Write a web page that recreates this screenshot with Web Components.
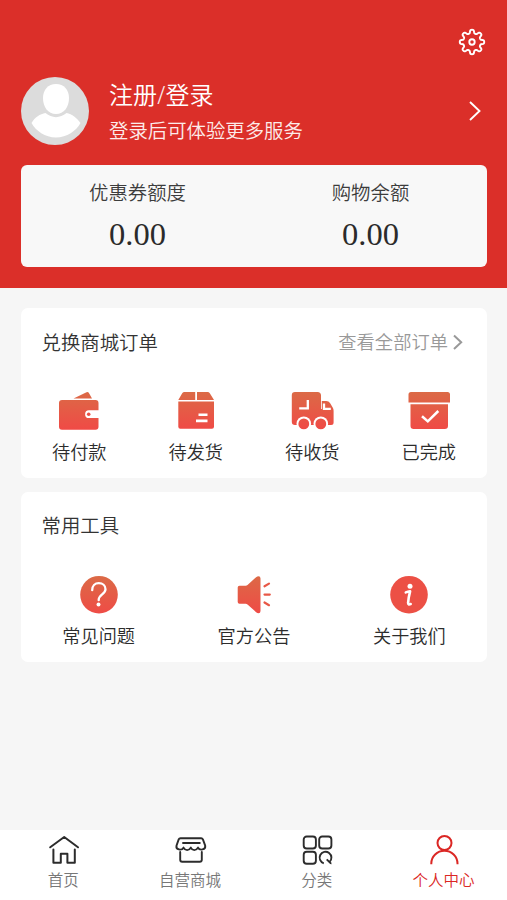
<!DOCTYPE html>
<html lang="zh-CN">
<head>
<meta charset="utf-8">
<title>个人中心</title>
<style>
  html, body { margin: 0; height: 100%; }
  body { background: #f6f6f6; color: #333; font-family: "Noto Sans CJK SC", "Liberation Sans", sans-serif; font-weight: 350; }
</style>
</head>
<body>
<member-page></member-page>
<script>
const grad = (h = 42) => `<defs><linearGradient id="g" gradientUnits="userSpaceOnUse" x1="0" y1="2" x2="0" y2="${h}"><stop offset="0" stop-color="#db6a46"/><stop offset="1" stop-color="#f04a46"/></linearGradient></defs>`;

const ICONS = {
  gear: ['0 0 30 30', `<g fill="none" stroke="#fff" stroke-width="1.9" stroke-linejoin="round"><path id="teeth"/><circle cx="15" cy="15" r="2.7"/></g>`],
  arrow: ['0 0 14 22', `<path d="M2 2l9.500 9L2 20" fill="none" stroke="#fff" stroke-width="1.9"/>`],
  more: ['0 0 12 16', `<path d="M2 1.500l7.200 6.700L2 15" fill="none" stroke="#999" stroke-width="2"/>`],
  avatar: ['0 0 68 68', `<circle cx="34" cy="34" r="34" fill="#dcdcdc"/><path d="M35 7c8 0 13 6 13 14 0 9-5 16-13 16s-13-7-13-16C22 13 27 7 35 7z" fill="#fff"/><path d="M10.500 46C14 40 19 37 24.500 36 31 41.500 39 41.500 45.500 36 51 37 56 41 59.500 46 55 54 46 60.500 35 60.500S15 54 10.500 46z" fill="#fff"/>`],
  wallet: ['0 0 48 44', grad(40) + `<path fill="url(#g)" d="M18.500 8.500L31 2.400q2-1 3.200 1L37 8.500zM7 10h33.500q3 0 3 3v7.300H34a3.900 3.900 0 0 0 0 7.800h9.500v8.600q0 3-3 3H7q-3 0-3-3V13q0-3 3-3z"/><circle cx="33.700" cy="24.200" r="1.800" fill="#ea5045"/>`],
  box: ['0 0 48 44', grad(40) + `<path fill="url(#g)" d="M12.500 2h10.700v8H6.300l3.900-6.700Q11 2 12.500 2zM25 2h10.500q1.500 0 2.300 1.300L42 10H25zM6.300 11.600H42v25.200q0 2-2 2H8.300q-2 0-2-2z"/><path d="M26.500 24.700h9M24 30.900h11.500" stroke="#fff" stroke-width="2.600"/>`],
  truck: ['0 0 48 44', grad(40) + `<path fill="url(#g)" d="M7 2h22.500q3.500 0 3.500 3.500V35H7q-3.200 0-3.200-3.200V5.200Q3.800 2 7 2zM34 11h4.200q2.600 0 3.800 2l2.700 4.500q.9 1.500.9 3.200V32.500q0 2.500-2.500 2.500H32.500V11z"/><path d="M19.800 10v8.300h-8.600M36 13.500v5.300h6.800" fill="none" stroke="#fff" stroke-width="2.300"/><path d="M33.500 10v9" stroke="#fff" stroke-width=".8"/><circle cx="15.800" cy="33.700" r="7.300" fill="#fff"/><circle cx="32.800" cy="33.700" r="7.300" fill="#fff"/><circle cx="15.800" cy="33.900" r="5.400" fill="url(#g)"/><circle cx="32.800" cy="33.900" r="5.400" fill="url(#g)"/>`],
  done: ['0 0 48 44', grad(40) + `<path fill="url(#g)" d="M6 2h36.500Q45 2 45 4.500v8H3.500v-8Q3.500 2 6 2zM5.500 14.300H43v21.500q0 3.200-3.200 3.200H8.700q-3.200 0-3.200-3.200z"/><path d="M17 26.200l5.800 5.200L33.300 21" fill="none" stroke="#fff" stroke-width="2.500"/>`],
  question: ['0 0 48 44', grad() + `<circle cx="24" cy="20.700" r="18.800" fill="url(#g)"/><path d="M17.200 16.200c0-4.400 2.800-7 6.600-7s6.700 2.300 6.700 6c0 4.900-6.800 5.400-6.800 10.500v.5" fill="none" stroke="#fff" stroke-width="2.300" stroke-linecap="round"/><circle cx="23.500" cy="30.500" r="2" fill="#fff"/>`],
  speaker: ['0 0 48 44', grad() + `<g transform="translate(0 -1.300)"><path fill="url(#g)" d="M9.500 13h6.200q1 0 1.800-.8l8.600-7.700q1.200-1 2.400-1 2 0 2 2.200v32.600q0 2.200-2 2.200-1.200 0-2.400-1l-8.600-7.700q-.8-.8-1.800-.8H9.500q-1.800 0-1.800-1.800V14.800Q7.700 13 9.500 13z"/><path d="M34.500 13.600l4.500-2.700M34.500 21.900h5.300M34.500 29.800l4.500 2.700" stroke="#e85847" stroke-width="2.200" stroke-linecap="round"/></g>`],
  info: ['0 0 48 44', `<circle cx="24" cy="20.700" r="18.800" fill="#ec5045"/><circle cx="25" cy="12.200" r="2.500" fill="#fff"/><path d="M20.800 18.400q2-.8 4.300-1-1.800 7-2 11.300-.2 2.500 2.600 1.300" fill="none" stroke="#fff" stroke-width="2.600" stroke-linejoin="round" stroke-linecap="round"/>`],
  home: ['0 0 40 36', `<g fill="none" stroke="currentColor" stroke-width="2" stroke-linejoin="round" stroke-linecap="round"><path d="M7.200 15.300L21.200 5l13.800 10.300M10.400 17.500v13.300h7.400v-9h6.600v9h7.400V17.500"/></g>`],
  shop: ['0 0 40 36', `<g fill="none" stroke="currentColor" stroke-width="1.900" stroke-linejoin="round" stroke-linecap="round"><path d="M10.500 6.200h20.600q1.300 0 1.800 1.200l2.300 6.200c.8 4.200-5.500 5.400-7.200 2-1.800 3.300-5.600 3.300-7.200 0-1.700 3.300-5.600 3.300-7.300 0-1.800 3.400-8 2.200-7-2L8.700 7.400q.5-1.200 1.800-1.200zM13 11h16.800M10.200 20v7.700q0 2 2 2h17.600q2 0 2-2V20"/></g>`],
  grid: ['0 0 40 36', `<g fill="none" stroke="currentColor" stroke-width="1.900"><rect x="6.700" y="4.500" width="12.200" height="12" rx="3"/><rect x="22.200" y="4.500" width="12.200" height="12" rx="3"/><rect x="6.700" y="19.700" width="12.200" height="12" rx="3"/><path d="M26.800 31.300a5.900 5.900 0 1 1 5.700-1.300M29.700 27.300l3.300 3.300q.7.700 1.400.6"/></g>`],
  person: ['0 0 40 36', `<g fill="none" stroke="currentColor" stroke-width="2"><circle cx="20.500" cy="11" r="7"/><path d="M7.300 32.300v-.8a13.100 12.800 0 0 1 26.200 0v.8"/></g>`]
};

/* Closed cog outline with eight rounded teeth. */
function gearPath() {
  const pts = [];
  for (let i = 0; i <= 160; i++) {
    const a = i / 160 * Math.PI * 2;
    const w = Math.tanh(2.1 * Math.cos(8 * a)) / Math.tanh(2.1);
    const r = 10.5 + 1.7 * w;
    pts.push((15 + r * Math.sin(a)).toFixed(2) + ' ' + (15 - r * Math.cos(a)).toFixed(2));
  }
  return 'M' + pts.join('L') + 'Z';
}

function define(name, html, setup) {
  const t = document.createElement('template');
  t.innerHTML = html;
  customElements.define(name, class extends HTMLElement {
    constructor() {
      super();
      this.attachShadow({ mode: 'open' }).append(t.content.cloneNode(true));
    }
    connectedCallback() { if (setup) setup(this, this.shadowRoot); }
  });
}

define('ui-icon', `<style>:host{display:block;flex:none}svg{display:block;width:100%;height:100%}</style><svg aria-hidden="true"></svg>`, (el, root) => {
  const [box, body] = ICONS[el.getAttribute('name')];
  const svg = root.querySelector('svg');
  svg.setAttribute('viewBox', box);
  svg.innerHTML = body;
  const teeth = svg.querySelector('#teeth');
  if (teeth) teeth.setAttribute('d', gearPath());
});

define('member-header', `<style>
  :host{display:block;box-sizing:border-box;height:287.500px;padding:27px 20px 0 21px;background:#db2f29;color:#fff}
  .top{display:flex;justify-content:flex-end;height:50px}
  .gear{width:30px;height:30px}
  .user{display:flex;align-items:center;height:68px}
  .avatar{width:68px;height:68px}
  .text{flex:1;margin-left:20px}
  .name{font-size:24px;line-height:36px;margin-bottom:2px;margin-top:-1px}
  .hint{font-size:19.400px;line-height:32px;color:#fdeceb}
  .arrow{width:14px;height:22px;margin-right:5px}
  ::slotted(balance-card){margin-top:20px}
</style>
<div class="top"><ui-icon class="gear" name="gear"></ui-icon></div>
<div class="user"><ui-icon class="avatar" name="avatar"></ui-icon>
<div class="text"><div class="name"><slot name="name"></slot></div><div class="hint"><slot name="hint"></slot></div></div>
<ui-icon class="arrow" name="arrow"></ui-icon></div>
<slot></slot>`);

define('balance-card', `<style>:host{display:grid;grid-template-columns:1fr 1fr;width:466px;height:102px;background:#f8f8f8;border-radius:6px}</style><slot></slot>`);

define('balance-item', `<style>
  :host{display:block;text-align:center}
  .l{font-size:19.400px;line-height:28px;margin-top:13px;color:#3c3c3c}
  .v{font:32.500px/38px "Liberation Serif",serif;margin-top:9px;color:#2b2b2b}
</style><div class="l"></div><div class="v"><slot></slot></div>`, (el, root) => { root.querySelector('.l').textContent = el.getAttribute('label'); });

define('menu-card', `<style>
  :host{display:block;box-sizing:border-box;width:466px;height:170px;background:#fff;border-radius:7px}
  header{display:flex;justify-content:space-between;align-items:center;height:66px;padding:0 23px 0 20.500px;font-size:19.400px}
  .items{display:grid;grid-auto-flow:column;grid-auto-columns:1fr;padding-top:16px}
</style><header><slot name="title"></slot><slot name="more"></slot></header><div class="items"><slot></slot></div>`);

define('more-link', `<style>
  :host{display:flex;align-items:center;gap:4px;font-size:18.300px;color:#999}
  ui-icon{width:12px;height:16px;margin-top:1px}
</style><slot></slot><ui-icon name="more"></ui-icon>`);

define('tab-bar', `<style>:host{display:grid;grid-template-columns:repeat(4,1fr);height:70px;background:#fff}</style><slot></slot>`);

customElements.define('entry-item', class extends HTMLElement {
  constructor() {
    super();
    this.attachShadow({ mode: 'open' });
  }
  connectedCallback() {
    this.shadowRoot.innerHTML = `<style>
      :host{display:flex;flex-direction:column;align-items:center;font-size:18.200px;line-height:26px;color:#2c2c2c}
      ui-icon{width:48px;height:44px;margin-bottom:4px}
      :host([tab]){padding-top:2px}
      :host([tab]) ui-icon{width:40px;height:36px;margin:0}
      :host([tab]) span{font-size:15.500px;line-height:22px;color:#777}
      :host([active]),:host([active]) span{color:#db2724}
    </style><ui-icon name="${this.getAttribute('icon')}"></ui-icon><span><slot></slot></span>`;
  }
});

customElements.define('member-page', class extends HTMLElement {
  constructor() {
    super();
    this.attachShadow({ mode: 'open' }).innerHTML = `<style>
      :host{display:flex;flex-direction:column;width:507px;height:900px;background:#f6f6f6}
      main{flex:1;display:flex;flex-direction:column;gap:13.500px;padding:20.500px 20px 0 21px}
      i{font:27px/1 "Liberation Serif",serif;margin:0 .5px;opacity:.9}
    </style>
    <member-header><span slot="name">注册<i>/</i>登录</span><span slot="hint">登录后可体验更多服务</span>
      <balance-card><balance-item label="优惠券额度">0.00</balance-item><balance-item label="购物余额">0.00</balance-item></balance-card>
    </member-header>
    <main>
      <menu-card><span slot="title">兑换商城订单</span><more-link slot="more">查看全部订单</more-link>
        <entry-item icon="wallet">待付款</entry-item><entry-item icon="box">待发货</entry-item><entry-item icon="truck">待收货</entry-item><entry-item icon="done">已完成</entry-item>
      </menu-card>
      <menu-card><span slot="title">常用工具</span>
        <entry-item icon="question">常见问题</entry-item><entry-item icon="speaker">官方公告</entry-item><entry-item icon="info">关于我们</entry-item>
      </menu-card>
    </main>
    <tab-bar><entry-item tab icon="home">首页</entry-item><entry-item tab icon="shop">自营商城</entry-item><entry-item tab icon="grid">分类</entry-item><entry-item tab active icon="person">个人中心</entry-item></tab-bar>`;
  }
});
</script>
</body>
</html>
